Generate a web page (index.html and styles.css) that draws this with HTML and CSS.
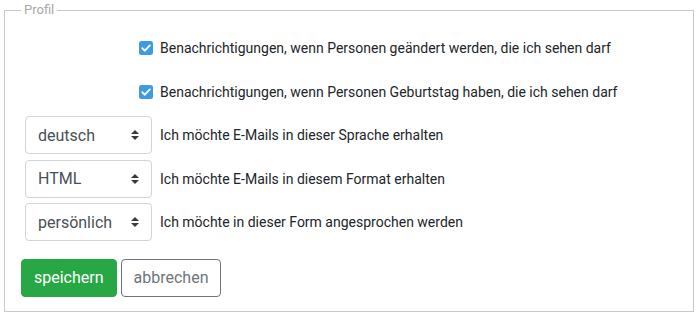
FILE: index.html
```html
<!DOCTYPE html>
<html lang="de">
<head>
<meta charset="utf-8">
<link rel="stylesheet" href="styles.css">
</head>
<body>
<fieldset class="profile">
  <legend class="profile-legend">Profil</legend>
  <div class="rows">
    <label class="row check-row">
      <span class="checkbox"><svg viewBox="0 0 14 14" width="14" height="14"><rect width="14" height="14" rx="2.5" fill="#3d9be6"/><path d="M3.3 7.2 L5.9 9.7 L10.8 4.4" fill="none" stroke="#fff" stroke-width="1.9" stroke-linecap="round" stroke-linejoin="round"/></svg></span>
      <span class="label">Benachrichtigungen, wenn Personen geändert werden, die ich sehen darf</span>
    </label>
    <label class="row check-row">
      <span class="checkbox"><svg viewBox="0 0 14 14" width="14" height="14"><rect width="14" height="14" rx="2.5" fill="#3d9be6"/><path d="M3.3 7.2 L5.9 9.7 L10.8 4.4" fill="none" stroke="#fff" stroke-width="1.9" stroke-linecap="round" stroke-linejoin="round"/></svg></span>
      <span class="label">Benachrichtigungen, wenn Personen Geburtstag haben, die ich sehen darf</span>
    </label>
    <div class="row select-row">
      <select class="select"><option>deutsch</option></select>
      <span class="label">Ich möchte E-Mails in dieser Sprache erhalten</span>
    </div>
    <div class="row select-row">
      <select class="select"><option>HTML</option></select>
      <span class="label">Ich möchte E-Mails in diesem Format erhalten</span>
    </div>
    <div class="row select-row">
      <select class="select"><option>persönlich</option></select>
      <span class="label">Ich möchte in dieser Form angesprochen werden</span>
    </div>
  </div>
  <div class="actions">
    <button class="btn btn-save">speichern</button>
    <button class="btn btn-cancel">abbrechen</button>
  </div>
</fieldset>
</body>
</html>
```

FILE: styles.css
```css
html, body {
  margin: 0;
  padding: 0;
  background: #fff;
}
body {
  font-family: Roboto, "Liberation Sans", sans-serif;
  color: #212529;
  padding: 0 6px 4px 4px;
}
.profile {
  margin: 0;
  border: 1px solid #c8c8c8;
  padding: 0 16px 14px 16px;
  min-width: 0;
}
.profile-legend {
  font-size: 13px;
  line-height: 20px;
  color: #a8a8a8;
  padding: 0 3px;
}
.rows {
  display: flex;
  flex-direction: column;
  gap: 5.5px;
  padding-top: 9px;
}
.row {
  height: 38px;
  display: flex;
  align-items: center;
}
.check-row {
  padding-left: 118px;
}
.checkbox {
  width: 14px;
  height: 14px;
  display: flex;
  margin-right: 7px;
}
.label {
  font-size: 14px;
  color: #212529;
}
.select-row {
  padding-left: 4px;
}
.select {
  -webkit-appearance: none;
  appearance: none;
  width: 127px;
  height: 38px;
  box-sizing: border-box;
  border: 1px solid #ced4da;
  border-radius: 4px;
  background-color: #fff;
  background-image: url("data:image/svg+xml;utf8,<svg xmlns='http://www.w3.org/2000/svg' width='8' height='10' viewBox='0 0 8 10'><path d='M4 0 L8 4 L0 4 Z M4 10 L0 6 L8 6 Z' fill='%23343a40'/></svg>");
  background-repeat: no-repeat;
  background-position: right 12px center;
  background-size: 8px 10px;
  padding: 6px 12px;
  font-family: Roboto, "Liberation Sans", sans-serif;
  font-size: 16px;
  color: #495057;
  margin-right: 8px;
}
.actions {
  display: flex;
  gap: 4px;
  margin-top: 17.5px;
}
.btn {
  height: 38px;
  box-sizing: border-box;
  padding: 6px 12px;
  font-family: Roboto, "Liberation Sans", sans-serif;
  font-size: 16px;
  border-radius: 4px;
  border: 1px solid transparent;
  cursor: pointer;
}
.btn-save {
  background: #28a745;
  border-color: #28a745;
  color: #fff;
}
.btn-cancel {
  background: #fff;
  border-color: #6c757d;
  color: #6c757d;
}
```
